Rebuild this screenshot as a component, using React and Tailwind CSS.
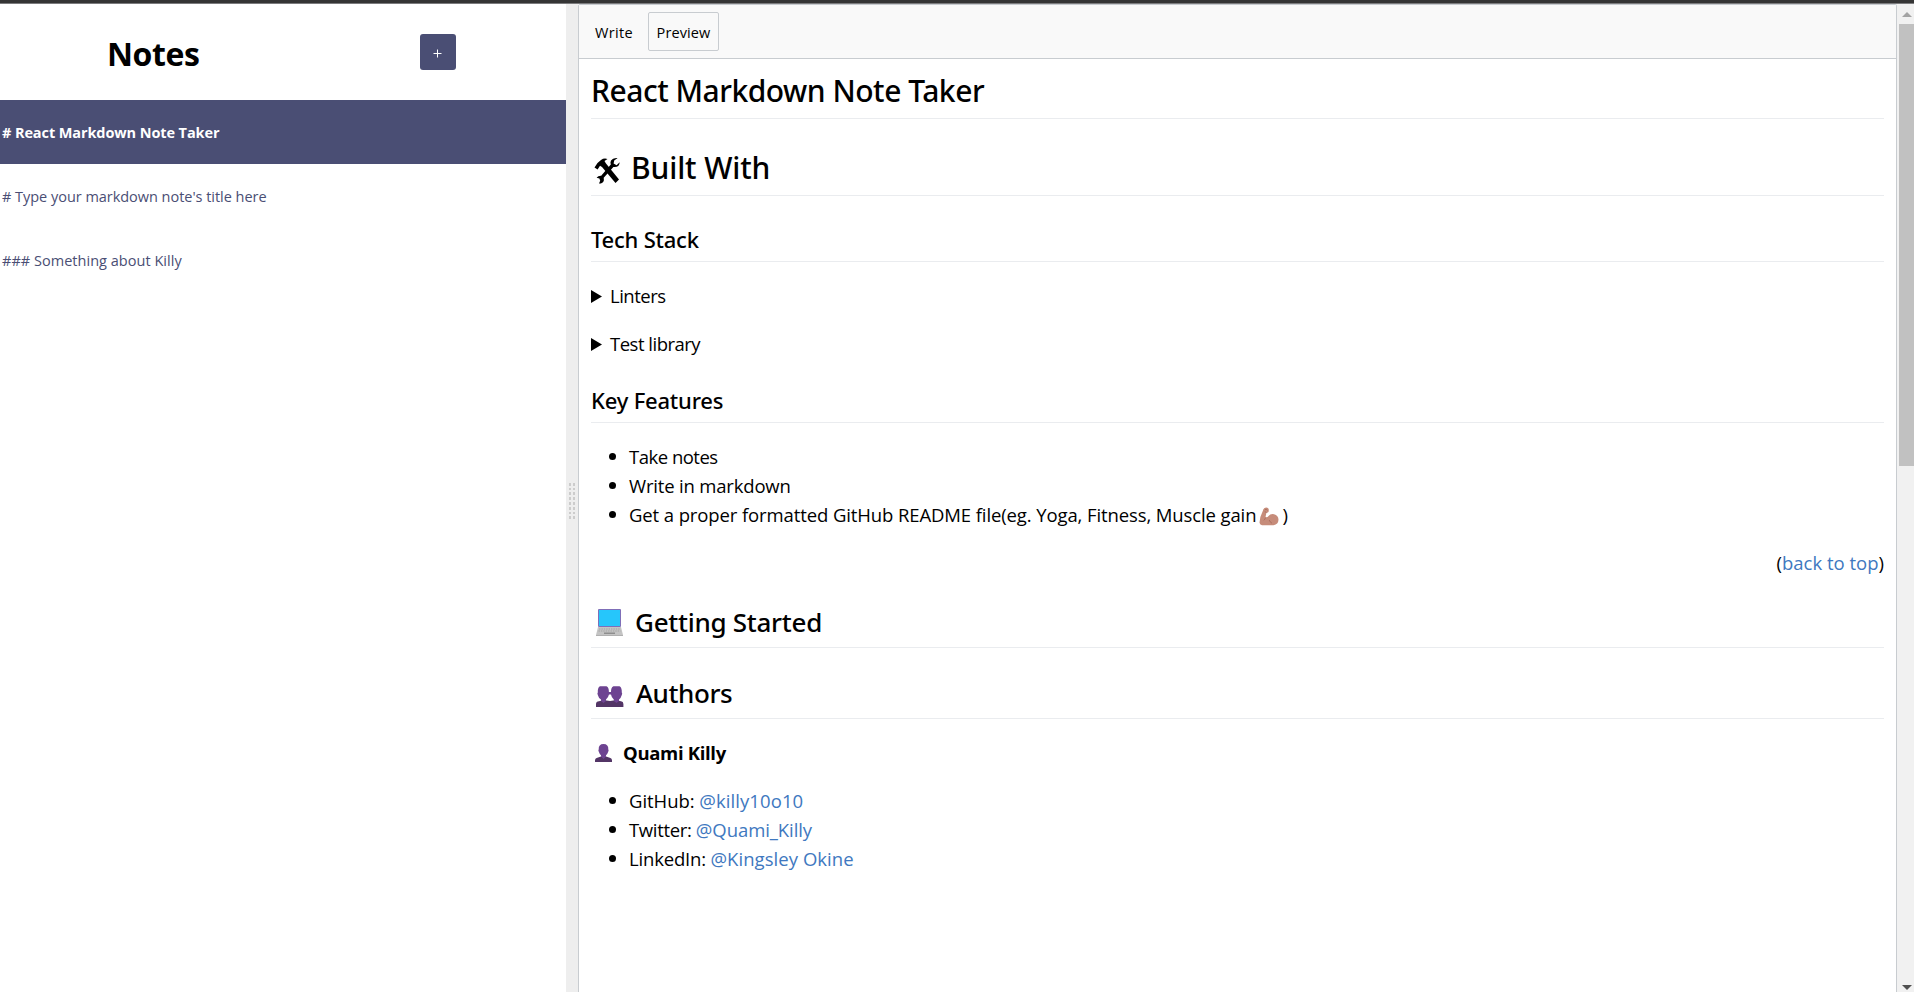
const body = "font-['Open_Sans','Noto_Sans',sans-serif] text-[18.5px] leading-[29px]";
const heading = "font-['Noto_Sans','Open_Sans',sans-serif] font-medium border-b border-[#eaecef] flex items-start";

function Tools() {
  return (
    <svg className="w-[26px] h-[28px] mt-[11px] ml-[3px] shrink-0" viewBox="0 0 26 28">
      <path d="M0.5 10.5 L3.5 6 L7 3 Q10 0.8 13.5 2 L10.5 4 L11.8 6.2 L25 22.5 L21.5 26 L8 10 L6 8.8 L3.6 12.5 Z" fill="#000" />
      <path d="M25.7 5.2 L22.6 8.2 L19.6 6.6 L20.2 3.4 L23.6 1 Q19 0.4 17 3.4 Q16 5.3 16.8 7.6 L7.2 18.8 Q4.2 18.6 2.6 20.8 L5.4 21.4 L6.2 23.8 L5 26.6 Q9.2 26.6 9.9 23.2 L9.7 20.8 L19.4 10 Q25.4 10.6 25.7 5.2 Z" fill="#000" />
    </svg>
  );
}

function Laptop() {
  return (
    <svg className="w-[27px] h-[27px] mt-[5px] ml-[5px] shrink-0" viewBox="0 0 27 27">
      <rect x="2" y="0" width="23" height="18" rx="1" fill="#7f6fb8" />
      <rect x="3" y="1" width="21" height="16" fill="#26c6fb" />
      <path d="M2 18 H25 L27 26 V27 H0 V26 Z" fill="#c4c4c4" />
      <path d="M3 20 H24 M2.5 22 H24.5" stroke="#a3a3a3" strokeWidth="1" strokeDasharray="1.4 1" />
      <rect x="8" y="23.5" width="11" height="1.5" fill="#8e8e8e" />
      <rect x="0" y="26" width="27" height="1" fill="#b0b0b0" />
    </svg>
  );
}

function People() {
  return (
    <svg className="w-[28px] h-[21px] mt-[11px] ml-[5px] shrink-0" viewBox="0 0 28 21">
      <path d="M0 21 V18 Q0 15.6 3 15.3 L6 14.6 H10.5 L14 15 L17.5 14.6 H22 L25 15.3 Q27.4 15.6 27.4 18 V21 Z" fill="#533566" />
      <path d="M4 0.3 H10.500 Q13 1.500 12.900 6 H15 Q14.900 1.500 17.400 0.300 H23.500 Q26 1.500 25.800 6.500 Q26.600 7 25.800 9 Q25 12 23 13.500 V15 L20.500 17 L17.800 15 V13.500 Q15.600 12 15 8.600 H13 Q12.200 12 10 13.500 V15 L7.500 17 L5 15 V13.500 Q2.500 12 1.800 9 Q1 7 1.800 6.500 Q1.500 1.500 4 0.300 Z" fill="#6d4391" />
    </svg>
  );
}

function Person() {
  return (
    <svg className="w-[17px] h-[18px] mt-[6px] ml-[4px] shrink-0" viewBox="0 0 17 18">
      <path d="M0 18 V16.500 Q0 14 3 13.400 L6 12.400 H11 L14 13.400 Q17 14 17 16.500 V18 Z" fill="#533566" />
      <path d="M8.500 0 Q13.600 0 13.300 5.500 Q14 6 13.300 7.600 Q12.600 10 11 11.200 V12.500 L8.500 15 L6 12.500 V11.200 Q4.400 10 3.700 7.600 Q3 6 3.700 5.500 Q3.400 0 8.500 0 Z" fill="#6d4391" />
    </svg>
  );
}

function Biceps() {
  return (
    <svg className="inline-block w-[20px] h-[19px] ml-[3px] mr-[3px] align-[-4px]" viewBox="0 0 20 19">
      <path d="M4 3.500 Q4.500 0.500 7 0.400 Q9.800 0.300 9.800 3 L9.600 4.800 Q9 6 7.400 5.800 L6.500 10.300 Q8.500 10.600 9.800 8.800 Q12 6.600 15 7.200 Q19.400 8.300 19.500 12.800 Q19.300 17.400 14.500 18.200 H3 Q0.400 18 0.500 15.400 Q0.700 10 4 3.500 Z" fill="#c68c7a" />
      <path d="M6 2.600 Q8 1.800 8.400 3.400 M5.800 4.600 L7.600 5.600 M6.600 10.500 Q6 12.500 4.800 13.300 M10.200 13 Q11 15.400 13 16.200" stroke="#a56b5a" strokeWidth="0.8" fill="none" />
    </svg>
  );
}

function Summary({ children, className }) {
  return (
    <div className={`${body} flex items-start ${className}`}>
      <svg className="w-[11px] h-[13px] mt-[9px] mr-[8px]" viewBox="0 0 11 13">
        <path d="M0 0 L11 6.5 L0 13 Z" />
      </svg>
      <span>{children}</span>
    </div>
  );
}

function Item({ children, className }) {
  return (
    <li className={`${body} h-[29px] flex items-start pl-[18px] whitespace-nowrap`}>
      <span className="w-[7px] h-[7px] rounded-full bg-black mt-[11px] mr-[13px] shrink-0" />
      <span className={className}>{children}</span>
    </li>
  );
}

const dots = Array.from({ length: 8 });
const link = "text-[#4078c0]";

export default function App() {
  return (
    <div className="w-[1914px] h-[992px] flex flex-col overflow-hidden bg-white text-black">
      <div className="h-[4px] shrink-0 bg-[#353535] border-b border-[#7b7b7d]" />
      <div className="flex flex-1 min-h-0">
        <aside className="w-[566px] shrink-0 font-['Open_Sans','Noto_Sans',sans-serif]">
          <header className="h-[96px] flex items-start">
            <h1 className="ml-[107px] w-[313px] mt-[28px] text-[32px] leading-[44px] font-bold tracking-[-0.4px]">Notes</h1>
            <button className="mt-[30px] w-[36px] h-[36px] rounded-[3px] bg-[#4a4e74] text-white flex items-center justify-center">
              <svg className="w-[9px] h-[9px] mt-[3px] mr-px" viewBox="0 0 9 9">
                <path d="M4.500 0.500 V8.500 M0.500 4.500 H8.500" stroke="#fff" strokeWidth="1" />
              </svg>
            </button>
          </header>
          <div className="h-[64px] bg-[#4a4e74] text-white font-bold text-[14.5px] leading-[66px] pl-[2px] tracking-[-0.1px]"># React Markdown Note Taker</div>
          <div className="h-[64px] text-[#4a4e74] text-[14.5px] leading-[66px] pl-[2px] tracking-[-0.03px]"># Type your markdown note's title here</div>
          <div className="h-[64px] text-[#4a4e74] text-[14.5px] leading-[66px] pl-[2px] tracking-[0.03px]">### Something about Killy</div>
        </aside>

        <div className="w-[12px] shrink-0 bg-[#eeeeee] flex items-center justify-center">
          <div className="grid grid-cols-2 gap-x-[2px] gap-y-[2px] mt-[6px]">
            {dots.map((_, i) => (
              <div key={i} className="contents">
                <span className="w-[2px] h-[2.800px] bg-[#cccccc]" />
                <span className="w-[2px] h-[2.800px] bg-[#cccccc]" />
              </div>
            ))}
          </div>
        </div>

        <main className="w-[1319px] shrink-0 border-l border-r border-t border-[#c8ccd0] rounded-t-[2px]">
          <div className="h-[54px] bg-[#f9f9f9] border-b border-[#c8ccd0] flex items-start pt-[7px] font-['Open_Sans','Noto_Sans',sans-serif] text-[14.500px]">
            <button className="ml-[10px] w-[59px] h-[39px] leading-[39px] pl-[5px] text-left border border-transparent tracking-[0.35px]">Write</button>
            <button className="w-[71px] h-[39px] leading-[39px] border border-[#c8ccd0] rounded-[2px] tracking-[0.1px]">Preview</button>
          </div>

          <article className="pl-[12px] pr-[12px]">
            <h1 className={`${heading} text-[30px] leading-[44px] mt-[10px] pb-[5px] tracking-[-0.48px]`}>React Markdown Note Taker</h1>
            <h1 className={`${heading} text-[30px] leading-[44px] h-[50px] mt-[27px] tracking-[-0.13px]`}>
              <Tools />
              <span className="ml-[11px]">Built With</span>
            </h1>
            <h3 className={`${heading} text-[22px] leading-[30px] mt-[28px] pb-[7px] tracking-[-0.22px]`}>Tech Stack</h3>
            <Summary className="mt-[19px] tracking-[-0.5px]">Linters</Summary>
            <Summary className="mt-[19px] tracking-[-0.5px]">Test library</Summary>
            <h3 className={`${heading} text-[22px] leading-[30px] mt-[27px] pb-[7px] tracking-[-0.2px]`}>Key Features</h3>
            <ul className="mt-[19px]">
              <Item className="tracking-[-0.5px]">Take notes</Item>
              <Item className="tracking-[-0.18px]">Write in markdown</Item>
              <Item className="tracking-[-0.11px]">Get a proper formatted GitHub README file(eg. Yoga, Fitness, Muscle gain<Biceps />)</Item>
            </ul>
            <p className={`${body} mt-[19px] text-right`}>(<a className={link}>back to top</a>)</p>
            <h2 className={`${heading} text-[26px] leading-[36px] h-[44px] mt-[27px] tracking-[-0.27px]`}>
              <Laptop />
              <span className="ml-[12px]">Getting Started</span>
            </h2>
            <h2 className={`${heading} text-[26px] leading-[36px] h-[44px] mt-[27px] tracking-[-0.42px]`}>
              <People />
              <span className="ml-[12px]">Authors</span>
            </h2>
            <p className={`${body} mt-[19px] flex items-start font-bold tracking-[-0.32px]`}>
              <Person />
              <span className="ml-[11px]">Quami Killy</span>
            </p>
            <ul className="mt-[19px]">
              <Item><span className="tracking-[-0.05px]">GitHub: </span><a className={`${link} tracking-[0.08px]`}>@killy10o10</a></Item>
              <Item><span className="tracking-[-0.35px]">Twitter: </span><a className={`${link} tracking-[-0.08px]`}>@Quami_Killy</a></Item>
              <Item><span className="tracking-[-0.18px]">LinkedIn: </span><a className={`${link} tracking-[0.05px]`}>@Kingsley Okine</a></Item>
            </ul>
          </article>
        </main>

        <div className="w-[17px] shrink-0 bg-[#f1f1f1] flex flex-col items-end">
          <svg className="w-[12px] h-[20px] shrink-0" viewBox="0 0 12 20">
            <path d="M0 13 L5 8 L10 13 Z" fill="#a3a3a3" />
          </svg>
          <div className="w-[15px] h-[442px] bg-[#c1c1c1]" />
          <svg className="w-[12px] h-[10px] mt-auto shrink-0" viewBox="0 0 12 10">
            <path d="M0 3 L10 3 L5 8 Z" fill="#505050" />
          </svg>
        </div>
      </div>
    </div>
  );
}
